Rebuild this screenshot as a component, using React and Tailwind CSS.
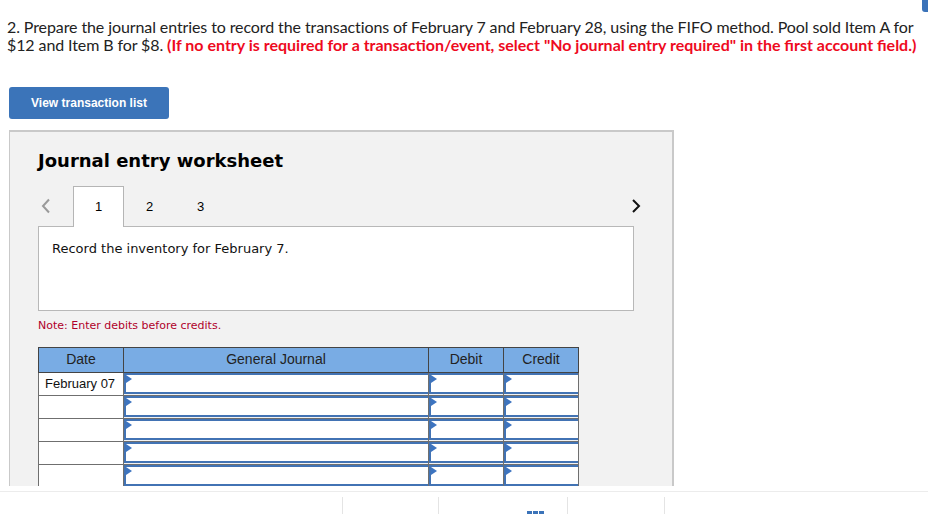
import React from "react";

const rows = ["February 07", "", "", "", ""];

const Flag = () => (
  <span className="absolute left-0 top-0 h-0 w-0 border-y-[4px] border-l-[6px] border-y-transparent border-l-[#3d74c0]" />
);

const InputCell = () => (
  <td className="h-[23px] border border-[#6f6f6f] p-0">
    <div className="relative h-[21px] border-2 border-r-0 border-[#4273b4] bg-white">
      <Flag />
    </div>
  </td>
);

const Chevron = ({ dir, className }) => (
  <svg width="10" height="16" viewBox="0 0 10 16" className={className}>
    <path
      d={dir === "left" ? "M8 1.5 L2 8 L8 14.5" : "M2 2 L8 8 L2 14"}
      fill="none"
      stroke="currentColor"
      strokeWidth="2"
    />
  </svg>
);

const App = () => {
  return (
    <div className="relative h-[514px] w-[928px] overflow-hidden bg-white font-['Liberation_Sans',Arial,sans-serif]">
      <div className="absolute right-0 top-0 h-[12px] w-[6px] rounded-bl-[3px] bg-[#3b73b9]" />

      <p className="whitespace-nowrap px-[7px] pt-[18px] font-['Lato','Open_Sans',sans-serif] text-[16px] leading-[18px] tracking-[-0.1px] text-[#222]">
        2. Prepare the journal entries to record the transactions of February 7 and February 28, using the FIFO method. Pool sold Item A for
        <br />
        $12 and Item B for $8.{" "}
        <span className="font-bold tracking-normal text-[#ee0a1e]">
          (If no entry is required for a transaction/event, select "No journal entry required" in the first account field.)
        </span>
      </p>

      <button className="ml-[9px] mt-[33px] flex h-[32px] w-[160px] items-center justify-center rounded-[3px] bg-[#3b74b9] text-[12px] font-bold text-white">
        View transaction list
      </button>

      <div className="ml-[9px] mt-[11px] h-[356px] w-[665px] overflow-hidden border-l border-r-2 border-t-2 border-[#c9c9c9] bg-[#f2f2f2] pl-[28px] font-['DejaVu_Sans',Verdana,sans-serif]">
        <h2 className="pt-[17px] text-[18px] font-bold leading-[24px] text-black">Journal entry worksheet</h2>

        <div className="mt-[13px] flex h-[41px] w-[596px] items-end">
          <span className="mb-[13px] ml-[3px] w-[32px] text-[#9a9a9a]">
            <Chevron dir="left" />
          </span>
          <div className="flex h-[41px] w-[51px] items-center justify-center border border-b-0 border-[#b5b5b5] bg-white font-['Liberation_Sans',Arial,sans-serif] text-[13px]">
            1
          </div>
          <div className="flex h-[41px] w-[51px] items-center justify-center font-['Liberation_Sans',Arial,sans-serif] text-[13px]">2</div>
          <div className="flex h-[41px] w-[51px] items-center justify-center font-['Liberation_Sans',Arial,sans-serif] text-[13px]">3</div>
          <span className="mb-[13px] ml-auto mr-[-7px] text-[#111]">
            <Chevron dir="right" />
          </span>
        </div>

        <div className="-mt-px h-[85px] w-[596px] border border-[#b8b8b8] bg-white px-[13px] pt-[12px] text-[13px] text-[#111]">
          Record the inventory for February 7.
        </div>

        <p className="mt-[7px] text-[11px] text-[#b0002a]">Note: Enter debits before credits.</p>

        <table className="mt-[12px] border-collapse font-['Liberation_Sans',Arial,sans-serif] text-[13px]">
          <thead>
            <tr className="h-[25px] bg-[#79ace4] text-[14px] text-[#222]">
              <th className="w-[85px] border border-[#444] font-normal">Date</th>
              <th className="w-[305px] border border-[#444] font-normal">General Journal</th>
              <th className="w-[75px] border border-[#444] font-normal">Debit</th>
              <th className="w-[75px] border border-[#444] font-normal">Credit</th>
            </tr>
          </thead>
          <tbody>
            {rows.map((d, i) => (
              <tr key={i}>
                <td className="h-[23px] border border-[#6f6f6f] bg-white px-[6px] text-[#111]">{d}</td>
                <InputCell />
                <InputCell />
                <InputCell />
              </tr>
            ))}
          </tbody>
        </table>
      </div>

      <div className="mt-[5px] flex h-[30px] border-t border-[#ececec]">
        <div className="ml-[342px] mt-[5px] h-full w-[97px] border-l border-r border-[#e4e4e4]" />
        <div className="relative mt-[5px] h-full w-[129px] border-r border-[#e4e4e4]">
          <div className="absolute left-[88px] top-[14px] flex gap-[1px]">
            <span className="h-[3px] w-[5px] bg-[#3b73b9]" />
            <span className="h-[3px] w-[5px] bg-[#3b73b9]" />
            <span className="h-[3px] w-[5px] bg-[#3b73b9]" />
          </div>
        </div>
        <div className="mt-[5px] h-full w-[97px] border-r border-[#e4e4e4]" />
      </div>
    </div>
  );
};

export default App;
